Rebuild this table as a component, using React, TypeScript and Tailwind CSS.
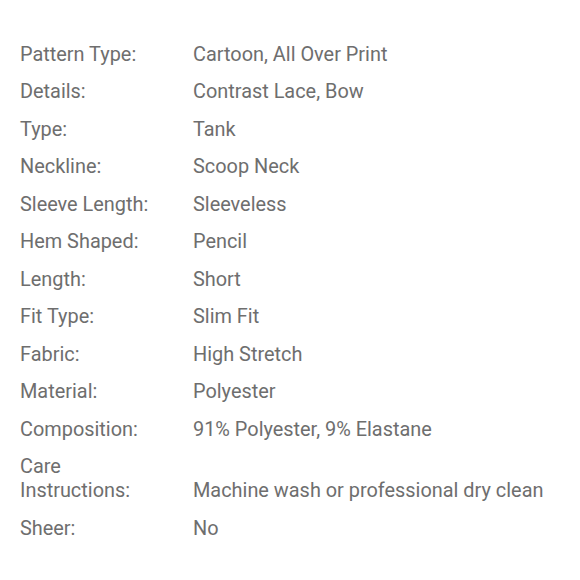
const specs: [string, string][] = [
  ["Pattern Type:", "Cartoon, All Over Print"],
  ["Details:", "Contrast Lace, Bow"],
  ["Type:", "Tank"],
  ["Neckline:", "Scoop Neck"],
  ["Sleeve Length:", "Sleeveless"],
  ["Hem Shaped:", "Pencil"],
  ["Length:", "Short"],
  ["Fit Type:", "Slim Fit"],
  ["Fabric:", "High Stretch"],
  ["Material:", "Polyester"],
  ["Composition:", "91% Polyester, 9% Elastane"],
  ["Care Instructions:", "Machine wash or professional dry clean"],
  ["Sheer:", "No"],
];

export default function App() {
  return (
    <div className="h-[580px] w-[580px] bg-white px-5 pt-9 font-['Roboto',sans-serif] text-[19.9px] leading-6 text-[#6e6e6e]">
      <dl className="flex flex-col">
        {specs.map(([label, value]) => (
          <div key={label} className="flex items-end py-[6.75px]">
            <dt className="w-[173px] shrink-0 pr-6">{label}</dt>
            <dd>{value}</dd>
          </div>
        ))}
      </dl>
    </div>
  );
}
